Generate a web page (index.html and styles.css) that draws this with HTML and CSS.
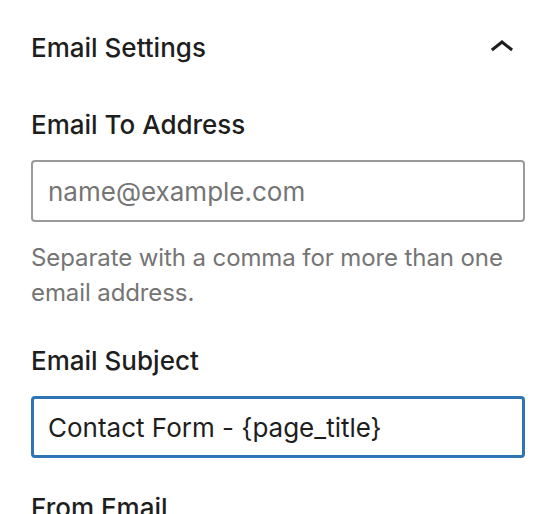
FILE: index.html
```html
<!DOCTYPE html>
<html lang="en">
<head>
<meta charset="utf-8">
<title>Email Settings</title>
<link rel="stylesheet" href="styles.css">
</head>
<body>
<div class="panel">
  <div class="panel-header">
    <h2 class="panel-title">Email Settings</h2>
    <span class="panel-toggle" aria-hidden="true">
      <svg viewBox="0 0 24 24" width="48" height="48"><path d="M6.5 12.4L12 8l5.5 4.4-.9 1.2L12 10l-4.6 3.6-1-1.2z"/></svg>
    </span>
  </div>
  <div class="panel-body">
    <div class="field field-with-help">
      <label class="field-label" for="to">Email To Address</label>
      <input class="field-input" id="to" type="text" placeholder="name@example.com">
      <p class="field-help">Separate with a comma for more than one email address.</p>
    </div>
    <div class="field">
      <label class="field-label" for="subject">Email Subject</label>
      <input class="field-input is-focused" id="subject" type="text" value="Contact Form - {page_title}">
    </div>
    <div class="field">
      <label class="field-label" for="from">From Email</label>
    </div>
  </div>
</div>
</body>
</html>
```
FILE: styles.css
```css
* { box-sizing: border-box; }
html, body { margin: 0; padding: 0; background: #fff; }
body {
  font-family: Inter, "Noto Sans", "Liberation Sans", sans-serif;
  color: #1e1e1e;
  overflow: hidden;
}
.panel { width: 558px; }
.panel-header {
  height: 96px;
  display: flex;
  align-items: center;
  justify-content: space-between;
  padding: 0 32px 0 31px;
}
.panel-title {
  margin: 0;
  font-size: 26px;
  font-weight: 500;
  line-height: 32px;
}
.panel-toggle { display: flex; width: 48px; height: 48px; }
.panel-toggle svg { fill: #1e1e1e; }
.panel-body { padding: 13px 33px 0 31px; }
.field { display: flex; flex-direction: column; margin-bottom: 34px; }
.field-with-help { margin-bottom: 35px; }
.field-label {
  font-size: 26px;
  font-weight: 500;
  line-height: 32px;
  margin-bottom: 19px;
}
.field-input {
  width: 100%;
  height: 62px;
  border: 2px solid #9a9a9a;
  border-radius: 4px;
  padding: 0 15px;
  font-family: inherit;
  font-size: 26px;
  color: #1e1e1e;
  background: #fff;
  outline: none;
}
.field-input::placeholder { color: #757575; opacity: 1; }
.field-input.is-focused {
  border: 3px solid #2f74b5;
  padding: 0 14px;
}
.field-help {
  margin: 18px 0 0;
  font-size: 24px;
  line-height: 35px;
  letter-spacing: -0.1px;
  color: #757575;
}
```
